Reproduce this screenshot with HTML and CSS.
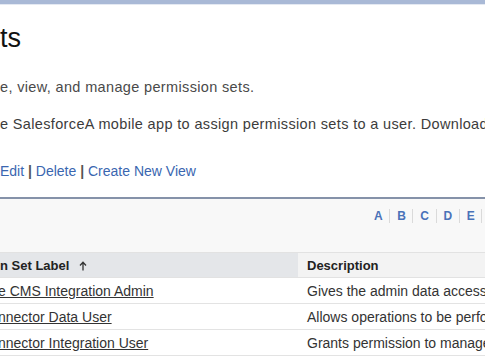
FILE: index.html
```html
<!DOCTYPE html>
<html>
<head>
<meta charset="utf-8">
<link rel="stylesheet" href="styles.css">
</head>
<body>
<div class="topbar"></div>
<div class="page-head">
  <h1 class="title">ts</h1>
  <p class="desc">e, view, and manage permission sets.</p>
  <p class="note">e SalesforceA mobile app to assign permission sets to a user. Download</p>
  <div class="views"><a class="lnk">Edit</a> <span class="sep">|</span> <a class="lnk">Delete</a> <span class="sep">|</span> <a class="lnk">Create New View</a></div>
</div>
<div class="list">
  <div class="alpha">
    <a class="letter">A</a><a class="letter">B</a><a class="letter">C</a><a class="letter">D</a><a class="letter">E</a><a class="letter">F</a><a class="letter">G</a>
  </div>
  <table class="grid">
    <thead>
      <tr>
        <th class="col-label">n Set Label <svg class="sort" width="8" height="10" viewBox="0 0 8 10"><path d="M4 9.5V1.5M1 4.5L4 1.2 7 4.5" fill="none" stroke="#333" stroke-width="1.3"/></svg></th>
        <th class="col-desc">Description</th>
      </tr>
    </thead>
    <tbody>
      <tr><td class="cell-label"><a class="rowlink">e CMS Integration Admin</a></td><td class="cell-desc">Gives the admin data access to CMS</td></tr>
      <tr><td class="cell-label"><a class="rowlink">nnector Data User</a></td><td class="cell-desc">Allows operations to be performed</td></tr>
      <tr><td class="cell-label"><a class="rowlink">nnector Integration User</a></td><td class="cell-desc">Grants permission to manage</td></tr>
      <tr><td class="cell-label"><a class="rowlink">nnector User</a></td><td class="cell-desc">Grants access</td></tr>
    </tbody>
  </table>
</div>
</body>
</html>
```

FILE: styles.css
```css
html, body {
  margin: 0;
  padding: 0;
}
body {
  width: 485px;
  height: 360px;
  overflow: hidden;
  background: #ffffff;
  font-family: "Liberation Sans", Arial, sans-serif;
  white-space: nowrap;
}
.topbar {
  height: 4px;
  background: #a9b9d6;
  border-bottom: 1px solid #e4e9f2;
}
.page-head {
  padding-top: 18px;
}
.title {
  margin: 0;
  font-size: 27px;
  line-height: 30px;
  font-weight: normal;
  color: #111111;
}
.desc {
  margin: 25px 0 0;
  font-size: 14.5px;
  letter-spacing: 0.35px;
  line-height: 18px;
  color: #4a4a4a;
}
.note {
  margin: 19px 0 0;
  font-size: 14.5px;
  letter-spacing: 0.35px;
  line-height: 18px;
  color: #3c3c3c;
}
.views {
  margin-top: 29px;
  font-size: 14px;
  line-height: 18px;
  color: #444444;
}
.lnk {
  color: #3a66b0;
  text-decoration: none;
}
.sep {
  color: #555555;
  font-weight: bold;
}
.list {
  margin-top: 17px;
  border-top: 2px solid #8592a9;
  background: #f8f8f8;
  height: 200px;
}
.alpha {
  display: flex;
  padding: 10px 0 0 367px;
}
.letter {
  font-size: 12px;
  line-height: 14px;
  font-weight: bold;
  color: #4a72b8;
  padding: 0 6.5px 0 7px;
  border-right: 1px solid #dadada;
}
.grid {
  margin-top: 29px;
  border-collapse: collapse;
  width: 720px;
  table-layout: fixed;
}
.grid th {
  height: 24px;
  padding: 0;
  text-align: left;
  font-size: 13px;
  font-weight: bold;
  color: #222222;
  border-top: 1px solid #e2e2e2;
  border-bottom: 1px solid #e2e2e2;
}
.col-label {
  width: 298px;
  background: #e4e6e9;
}
.col-desc {
  background: #f3f3f3;
  padding-left: 9px !important;
}
.sort {
  margin-left: 6px;
  vertical-align: -1px;
}
.grid td {
  height: 25px;
  padding: 0;
  background: #ffffff;
  border-bottom: 1px solid #e3e3e3;
  font-size: 14px;
  color: #333333;
  overflow: hidden;
}
.cell-label {
  text-indent: -2px;
}
.cell-desc {
  padding-left: 9px !important;
}
.rowlink {
  color: #333333;
  text-decoration: underline;
}
```
